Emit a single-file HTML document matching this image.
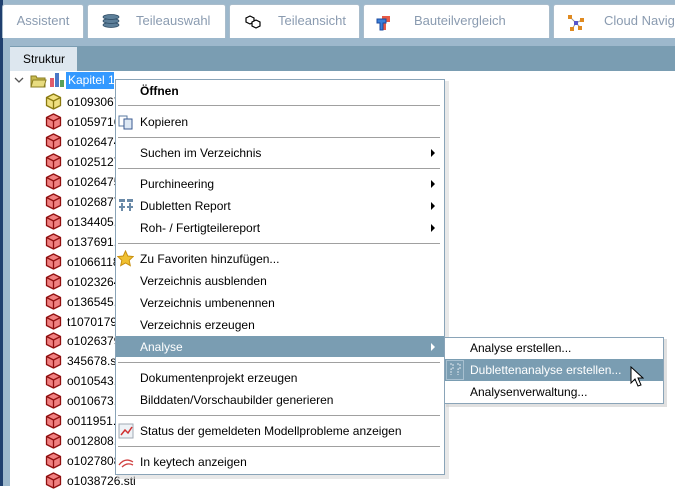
<!DOCTYPE html><html><head><meta charset="utf-8"><style>
*{margin:0;padding:0;box-sizing:border-box}
body{width:675px;height:486px;overflow:hidden;background:#fff;font-family:"Liberation Sans",sans-serif;font-size:12px;position:relative;color:#000}
.a{position:absolute}
.tab{position:absolute;top:4px;height:34px;background:#fff;border:1px solid #a9bccb;border-bottom:none;border-radius:3px 3px 0 0;color:#8a9bb0;font-size:13px;line-height:32px;white-space:nowrap;overflow:hidden}
.row{position:absolute;left:67px;height:18px;line-height:18px;font-size:12px;white-space:nowrap}
.cube{position:absolute;left:45px;width:17px;height:17px}
.mi{position:absolute;left:140px;font-size:12px;line-height:14px;white-space:nowrap}
.sep{position:absolute;left:118px;width:322px;height:1px;background:#a0a0a0}
.arr{position:absolute;left:431px;width:0;height:0;border-left:4px solid #000;border-top:4px solid transparent;border-bottom:4px solid transparent}
</style></head><body>
<div class="a" style="left:0;top:0;width:675px;height:46px;background:#9db8cc"></div>
<div class="a" style="left:0;top:0;width:3px;height:486px;background:#1f3f6e"></div>
<div class="a" style="left:3px;top:46px;width:7px;height:440px;background:#9db8cc"></div>
<div class="tab" style="left:2px;width:82px;text-align:center">Assistent</div>
<div class="tab" style="left:87px;width:139px;padding-left:48px">Teileauswahl
<svg class="a" style="left:14px;top:9px" width="18" height="14"><g fill="#5d7f99" stroke="#2c4a63" stroke-width=".7"><ellipse cx="9" cy="11" rx="8" ry="2.5"/><ellipse cx="9" cy="7" rx="8" ry="2.5"/><ellipse cx="9" cy="3" rx="8" ry="2.5"/></g></svg></div>
<div class="tab" style="left:229px;width:131px;padding-left:48px;color:#8a9bb0">Teileansicht
<svg class="a" style="left:14px;top:9px" width="18" height="16"><g fill="#fff" stroke="#000" stroke-width="1.2"><path d="M2 4l4-2 4 2v4l-4 2-4-2z"/><path d="M8 8l4-2 4 2v4l-4 2-4-2z"/></g></svg></div>
<div class="tab" style="left:363px;width:187px;padding-left:50px">Bauteilvergleich
<svg class="a" style="left:12px;top:9px" width="16" height="18"><path d="M6 2h8v6h-4v8H6z" fill="#e85a45"/><path d="M1 5h9v4H7v7H4V9H1z" fill="#3b7fd8" stroke="#1a4aa0"/></svg></div>
<div class="tab" style="left:553px;width:130px;padding-left:50px">Cloud Naviga
<svg class="a" style="left:14px;top:10px" width="16" height="16"><path d="M2 2l6 6 6-3M8 8l-4 6M8 8l4 4" stroke="#999" fill="none"/><g fill="#e08a20"><rect x="0" y="0" width="4" height="4"/><rect x="12" y="3" width="4" height="4"/><rect x="2" y="12" width="4" height="4"/><rect x="10" y="11" width="4" height="4"/></g><rect x="6" y="6" width="4" height="4" fill="#5555cc"/></svg></div>
<div class="a" style="left:10px;top:46px;width:665px;height:25px;background:#7a9db2"></div>
<div class="a" style="left:10px;top:47px;width:67px;height:24px;background:#dde7ef;line-height:24px;padding-left:13px">Struktur</div>
<svg class="a" style="left:14px;top:76px" width="10" height="8"><path d="M1 2l4 4 4-4" stroke="#555" fill="none" stroke-width="1.3"/></svg>
<svg class="a" style="left:30px;top:73px" width="17" height="15"><path d="M1 3h5l1 2h8v9H1z" fill="#c8bb50" stroke="#8a7d20"/><path d="M3 7h13l-2 7H1z" fill="#e8dc80" stroke="#8a7d20"/></svg>
<svg class="a" style="left:49px;top:72px" width="16" height="16"><rect x="1" y="6" width="4" height="9" fill="#e05a6a"/><rect x="6" y="1" width="4" height="14" fill="#4a78c8"/><rect x="11" y="8" width="4" height="7" fill="#5aa05a"/></svg>
<div class="a" style="left:66px;top:72px;width:48px;height:17px;background:#3399ff;color:#fff;line-height:17px;padding-left:2px;overflow:hidden;white-space:nowrap">Kapitel 1</div>
<svg width="0" height="0" style="position:absolute"><defs><g id="c"><path d="M8.5 1l7 3.5v8l-7 3.5-7-3.5v-8z" stroke-width="1.3" stroke-linejoin="round"/><path d="M1.5 4.5l7 3.5 7-3.5M8.5 8v8" fill="none" stroke-width="1.3"/></g></defs></svg>
<svg class="cube" style="top:93px"><use href="#c" fill="#f0e080" stroke="#8a7a10"/></svg>
<div class="row" style="top:93px">o1093067</div>
<div id="tree"></div>
<script>
var t=["o1059716","o1026474","o1025127","o1026475","o1026877","o134405.","o137691.","o1066118","o1023264","o136545.","t1070179","o1026379","345678.st","o010543.","o010673.","o011951.","o012808.","o1027808","o1038726.stl"],h="";
for(var i=0;i<t.length;i++){var y=113+i*19.95;h+='<svg class="cube" style="top:'+y+'px"><use href="#c" fill="#f08080" stroke="#901010"/></svg><div class="row" style="top:'+y+'px">'+t[i]+'</div>';}
document.getElementById("tree").innerHTML=h;
</script>
<div class="a" style="left:117px;top:81px;width:332px;height:398px;background:#d8d8d8;opacity:.6"></div>
<div class="a" style="left:115px;top:79px;width:330px;height:396px;background:#fff;border:1px solid #8aa4b8"></div>
<div class="mi" style="top:84px;font-weight:bold">Öffnen</div>
<div class="sep" style="top:105px"></div>
<svg class="a" style="left:118px;top:114px" width="16" height="16"><rect x="1" y="2" width="8" height="10" fill="#fff" stroke="#5a7aa0"/><rect x="6" y="5" width="8" height="10" fill="#dde8f4" stroke="#3a5a90"/></svg>
<div class="mi" style="top:115px">Kopieren</div>
<div class="sep" style="top:137px"></div>
<div class="mi" style="top:146px">Suchen im Verzeichnis</div><div class="arr" style="top:149px"></div>
<div class="sep" style="top:168px"></div>
<div class="mi" style="top:177px">Purchineering</div><div class="arr" style="top:180px"></div>
<svg class="a" style="left:118px;top:198px" width="16" height="14"><g fill="#6a8aa8"><rect x="1" y="1" width="6" height="3"/><rect x="9" y="1" width="6" height="3"/><rect x="3" y="5" width="2" height="8"/><rect x="11" y="5" width="2" height="8"/><rect x="1" y="8" width="6" height="2"/><rect x="9" y="8" width="6" height="2"/></g></svg>
<div class="mi" style="top:199px">Dubletten Report</div><div class="arr" style="top:202px"></div>
<div class="mi" style="top:221px">Roh- / Fertigteilereport</div><div class="arr" style="top:224px"></div>
<div class="sep" style="top:243px"></div>
<svg class="a" style="left:117px;top:250px" width="17" height="17"><path d="M8.5 1l2.3 5 5.4.6-4 3.7 1.1 5.3-4.8-2.7-4.8 2.7 1.1-5.3-4-3.7 5.4-.6z" fill="#f0c030" stroke="#c89010"/></svg>
<div class="mi" style="top:252px">Zu Favoriten hinzufügen...</div>
<div class="mi" style="top:274px">Verzeichnis ausblenden</div>
<div class="mi" style="top:296px">Verzeichnis umbenennen</div>
<div class="mi" style="top:318px">Verzeichnis erzeugen</div>
<div class="a" style="left:116px;top:336px;width:328px;height:21px;background:#7a9db2"></div>
<div class="mi" style="top:340px;color:#fff">Analyse</div><div class="arr" style="top:343px;border-left-color:#fff"></div>
<div class="sep" style="top:362px"></div>
<div class="mi" style="top:371px">Dokumentenprojekt erzeugen</div>
<div class="mi" style="top:393px">Bilddaten/Vorschaubilder generieren</div>
<div class="sep" style="top:415px"></div>
<svg class="a" style="left:118px;top:423px" width="16" height="16"><rect x="1" y="1" width="14" height="14" fill="#eef2f6" stroke="#a0aab4"/><path d="M3 12l4-5 3 3 4-6" stroke="#d03030" fill="none" stroke-width="1.5"/></svg>
<div class="mi" style="top:424px">Status der gemeldeten Modellprobleme anzeigen</div>
<div class="sep" style="top:446px"></div>
<svg class="a" style="left:118px;top:456px" width="16" height="12"><path d="M1 9q6-8 14-3M4 11q5-5 11-2" stroke="#d04040" fill="none" stroke-width="1.3"/></svg>
<div class="mi" style="top:455px">In keytech anzeigen</div>
<div class="a" style="left:446px;top:339px;width:221px;height:68px;background:#ccc;opacity:.6"></div>
<div class="a" style="left:444px;top:337px;width:220px;height:67px;background:#fff;border:1px solid #8aa4b8"></div>
<div class="a" style="left:445px;top:359px;width:218px;height:22px;background:#7a9db2"></div>
<div class="a" style="left:446px;top:360px;width:18px;height:20px;border:1px solid #a8c0d0"></div>
<svg class="a" style="left:448px;top:363px" width="14" height="14"><g stroke="#dde6ee" fill="none" stroke-dasharray="2 1"><path d="M2 1h3v5H3v6M9 1h3v5h-2v6"/></g></svg>
<div class="a" style="left:470px;top:341px;font-size:12px">Analyse erstellen...</div>
<div class="a" style="left:470px;top:363px;font-size:12px;color:#fff">Dublettenanalyse erstellen...</div>
<div class="a" style="left:470px;top:385px;font-size:12px">Analysenverwaltung...</div>
<svg class="a" style="left:630px;top:366px" width="14" height="22"><path d="M1 1v16l4-4 3 7 3-1-3-7h5z" fill="#fff" stroke="#000"/></svg>
</body></html>
